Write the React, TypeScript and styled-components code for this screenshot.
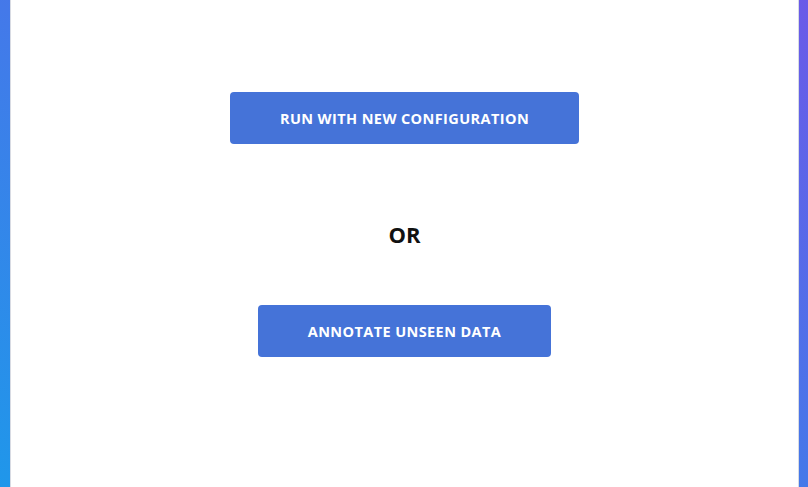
import React from "react";
import styled, { createGlobalStyle } from "styled-components";

const Global = createGlobalStyle`
  html, body { margin: 0; padding: 0; height: 100%; }
  body {
    background: linear-gradient(to top right, #1f97ea, #6a5ae8);
    font-family: "Open Sans", "Liberation Sans", sans-serif;
    overflow: hidden;
  }
  #root { height: 100%; }
`;

const Page = styled.div`
  height: 100%;
  padding: 0 9px 0 10px;
  box-sizing: border-box;
`;

const Panel = styled.main`
  height: 100%;
  background: #ffffff;
  border-left: 1px solid #d8dbe3;
  border-right: 1px solid #d8dbe3;
  display: flex;
  flex-direction: column;
  align-items: center;
  padding-top: 92px;
  box-sizing: border-box;
`;

const ActionButton = styled.button<{ $width: number }>`
  width: ${(p) => p.$width}px;
  height: 52px;
  padding: 0;
  border: none;
  border-radius: 4px;
  background: #4573d8;
  color: #ffffff;
  font-family: "Open Sans", "Liberation Sans", sans-serif;
  font-weight: 700;
  font-size: 14.5px;
  letter-spacing: 0.4px;
  text-transform: uppercase;
  cursor: pointer;
`;

const Separator = styled.div`
  margin: 71px 0 52px;
  font-size: 22px;
  font-weight: 700;
  color: #111111;
  line-height: 38px;
`;

export default function App() {
  return (
    <>
      <Global />
      <Page>
        <Panel>
          <ActionButton $width={349}>Run with new configuration</ActionButton>
          <Separator>OR</Separator>
          <ActionButton $width={293}>Annotate unseen data</ActionButton>
        </Panel>
      </Page>
    </>
  );
}
